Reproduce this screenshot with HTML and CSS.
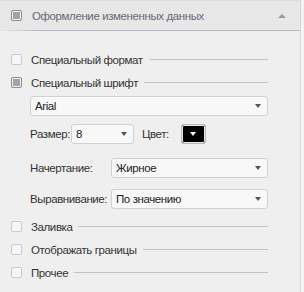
FILE: index.html
```html
<!DOCTYPE html>
<html lang="ru">
<head>
    <meta charset="UTF-8">
    <title>Оформление измененных данных</title>
    <link rel="stylesheet" href="styles.css">
</head>
<body>
    <div class="panel">
        <div class="header">
            <span class="check checked"></span>
            <span class="header-title">Оформление измененных данных</span>
            <span class="collapse"></span>
        </div>

        <div class="section">
            <div class="row first">
                <span class="check"></span>
                <span class="label">Специальный формат</span>
                <span class="rule"></span>
            </div>
            <div class="row">
                <span class="check checked"></span>
                <span class="label">Специальный шрифт</span>
                <span class="rule"></span>
            </div>

            <div class="fields">
                <div class="select font-select">
                    <span>Arial</span>
                    <span class="arrow"></span>
                </div>

                <div class="field size-row">
                    <span class="field-label">Размер:</span>
                    <div class="select size-select">
                        <span>8</span>
                        <span class="arrow"></span>
                    </div>
                    <span class="field-label color-label">Цвет:</span>
                    <div class="color-box"><span class="arrow light"></span></div>
                </div>

                <div class="field style-row">
                    <span class="field-label wide">Начертание:</span>
                    <div class="select grow">
                        <span>Жирное</span>
                        <span class="arrow"></span>
                    </div>
                </div>

                <div class="field align-row">
                    <span class="field-label wide">Выравнивание:</span>
                    <div class="select grow">
                        <span>По значению</span>
                        <span class="arrow"></span>
                    </div>
                </div>
            </div>

            <div class="row gap">
                <span class="check"></span>
                <span class="label">Заливка</span>
                <span class="rule"></span>
            </div>
            <div class="row">
                <span class="check"></span>
                <span class="label">Отображать границы</span>
                <span class="rule"></span>
            </div>
            <div class="row">
                <span class="check"></span>
                <span class="label">Прочее</span>
                <span class="rule"></span>
            </div>
        </div>
    </div>
</body>
</html>
```

FILE: styles.css
```css
body {
    margin: 0;
    background-color: #f3f3f3;
    font-family: "Liberation Sans", Arial, sans-serif;
    font-size: 11.5px;
    letter-spacing: -0.4px;
    color: #333333;
}
.panel {
    width: 300px;
    height: 292px;
    background-color: #efefef;
    border-right: 1px solid #d6d6d6;
}
.header {
    position: relative;
    height: 30px;
    display: flex;
    align-items: center;
    padding-left: 11px;
    background-color: #e7e7e7;
    border-top: 1px solid #dedede;
    box-sizing: border-box;
}
.header::after {
    content: "";
    position: absolute;
    left: 0;
    right: 0;
    bottom: -1px;
    height: 1px;
    background: linear-gradient(to right, #e7e7e7 0px, #b4b8c0 40px, #b4b8c0 100%);
}
.header-title {
    margin-left: 10px;
    color: #6c6878;
}
.collapse {
    margin-left: auto;
    margin-right: 14px;
    width: 0;
    height: 0;
    border-left: 4px solid transparent;
    border-right: 4px solid transparent;
    border-bottom: 4px solid #9a9a9a;
}
.check {
    width: 11px;
    height: 11px;
    box-sizing: border-box;
    border: 1px solid #c9c9c9;
    border-radius: 2px;
    background-color: #f7f7f7;
    flex-shrink: 0;
}
.check.checked {
    border-color: #8e8e8e;
    background-color: #a3a3a3;
    box-shadow: inset 0 0 0 1px #f4f4f4;
}
.section {
    padding: 0 32px 0 11px;
}
.row {
    height: 23px;
    display: flex;
    align-items: center;
}
.row.first {
    margin-top: 18px;
}
.row.gap {
    margin-top: 6px;
}
.label {
    margin-left: 9px;
    white-space: nowrap;
}
.rule {
    flex: 1;
    height: 1px;
    margin-left: 6px;
    background-color: #c3c3c3;
}
.fields {
    padding-left: 19px;
    padding-top: 2px;
}
.select {
    height: 20px;
    box-sizing: border-box;
    border: 1px solid #cfcfd6;
    border-radius: 3px;
    background-color: #f8f8f8;
    display: flex;
    align-items: center;
    justify-content: space-between;
    padding: 0 6px 0 4px;
    color: #222222;
}
.arrow {
    width: 0;
    height: 0;
    border-left: 3px solid transparent;
    border-right: 3px solid transparent;
    border-top: 4px solid #555555;
}
.arrow.light {
    border-top-color: #ffffff;
}
.field {
    display: flex;
    align-items: center;
}
.size-row {
    margin-top: 8px;
}
.style-row {
    margin-top: 14px;
}
.align-row {
    margin-top: 11px;
}
.field-label {
    white-space: nowrap;
}
.field-label.wide {
    width: 81px;
}
.size-select {
    width: 63px;
    margin-left: 1px;
}
.color-label {
    margin-left: 8px;
}
.color-box {
    width: 25px;
    height: 20px;
    box-sizing: border-box;
    margin-left: 12px;
    border: 1px solid #b8b8b8;
    border-radius: 3px;
    background-color: #000000;
    box-shadow: inset 0 0 0 1px #e8e8e8;
    display: flex;
    align-items: center;
    justify-content: center;
}
.grow {
    flex: 1;
}
```
